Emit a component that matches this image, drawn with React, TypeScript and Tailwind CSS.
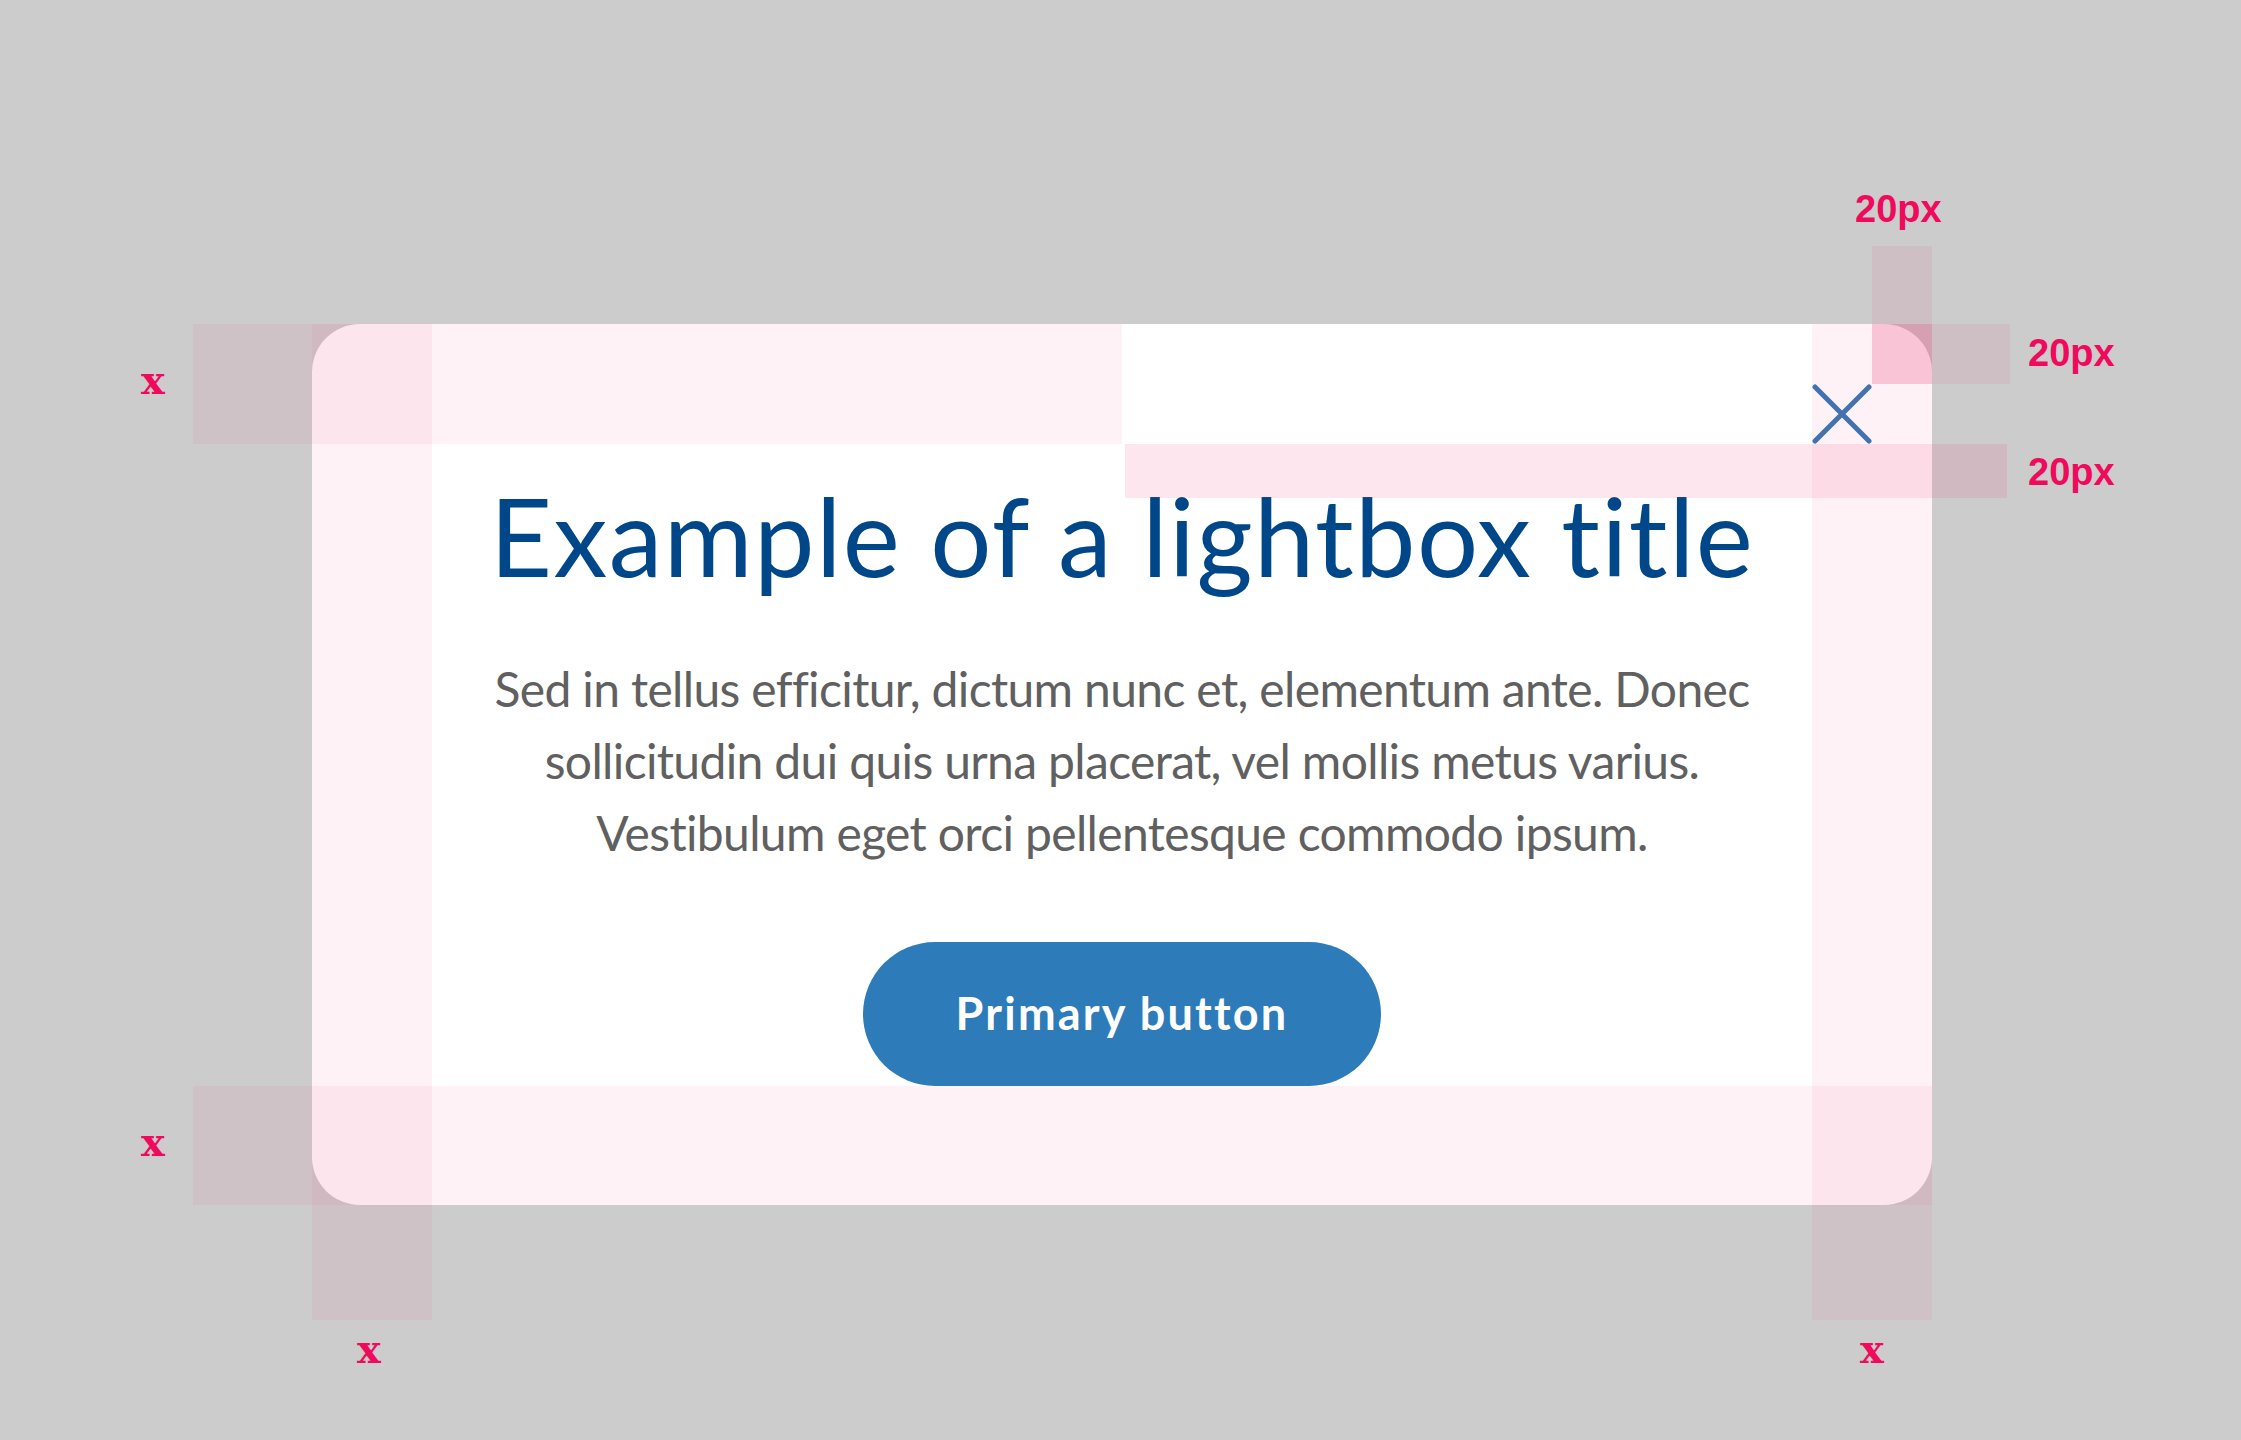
import React from "react";

// annotation overlays (pink measurement boxes) sit on top of the page
const Band: React.FC<{ className: string }> = ({ className }) => (
  <div className={`absolute pointer-events-none ${className}`} />
);

const CloseIcon: React.FC = () => (
  <svg width="60" height="60" viewBox="0 0 60 60" fill="none">
    <path
      d="M3 3 L57 57 M57 3 L3 57"
      stroke="#3576b4"
      strokeWidth="5"
      strokeLinecap="round"
    />
  </svg>
);

const Label: React.FC<{ className: string; children: React.ReactNode }> = ({
  className,
  children,
}) => (
  <span
    className={`absolute pointer-events-none text-[#ef0a5b] leading-none ${className}`}
  >
    {children}
  </span>
);

export default function App() {
  return (
    <div className="relative w-full min-h-[1440px] bg-[#cccccc] overflow-hidden">
      <div className="pt-[324px] pl-[312px]">
        <div className="relative w-[1620px] rounded-[48px] bg-white flex flex-col items-center px-[120px] pt-[157px] pb-[119px]">
          <button className="absolute top-[60px] right-[60px] w-[60px] h-[60px] flex items-center justify-center cursor-pointer">
            <CloseIcon />
          </button>

          <h1 className="text-[108px] leading-none tracking-[1.4px] text-[#00478a] font-['Lato','Noto_Sans',sans-serif] whitespace-nowrap">
            Example of a lightbox title
          </h1>

          <p className="mt-[64px] text-[48px] leading-[72px] tracking-[-0.65px] text-[#606060] text-center font-['Lato','Open_Sans',sans-serif] whitespace-nowrap">
            Sed in tellus efficitur, dictum nunc et, elementum ante. Donec
            <br />
            sollicitudin dui quis urna placerat, vel mollis metus varius.
            <br />
            Vestibulum eget orci pellentesque commodo ipsum.
          </p>

          <button className="mt-[73px] w-[518px] h-[144px] rounded-full bg-[#2d7bb8] text-white text-[45px] tracking-[2.2px] font-bold font-['Lato','Noto_Sans',sans-serif] flex items-center justify-center">
            Primary button
          </button>
        </div>
      </div>

      {/* measurement overlays */}
      <Band className="left-[193px] top-[324px] w-[929px] h-[120px] bg-[rgba(236,64,122,0.07)]" />
      <Band className="left-[312px] top-[324px] w-[120px] h-[996px] bg-[rgba(236,64,122,0.07)]" />
      <Band className="left-[193px] top-[1086px] w-[1739px] h-[119px] bg-[rgba(236,64,122,0.07)]" />
      <Band className="left-[1812px] top-[324px] w-[120px] h-[996px] bg-[rgba(236,64,122,0.07)]" />
      <Band className="left-[1125px] top-[444px] w-[882px] h-[54px] bg-[rgba(236,64,122,0.13)]" />
      <Band className="left-[1872px] top-[324px] w-[60px] h-[60px] bg-[rgba(236,64,122,0.26)]" />
      <Band className="left-[1872px] top-[246px] w-[60px] h-[78px] bg-[rgba(236,64,122,0.09)]" />
      <Band className="left-[1932px] top-[324px] w-[78px] h-[60px] bg-[rgba(236,64,122,0.09)]" />

      <Label className="left-[1855px] top-[190px] text-[38px] font-bold font-['Liberation_Sans',Arial,sans-serif]">
        20px
      </Label>
      <Label className="left-[2028px] top-[334px] text-[38px] font-bold font-['Liberation_Sans',Arial,sans-serif]">
        20px
      </Label>
      <Label className="left-[2028px] top-[453px] text-[38px] font-bold font-['Liberation_Sans',Arial,sans-serif]">
        20px
      </Label>

      <Label className="left-[141px] top-[360px] text-[40px] font-bold font-['DejaVu_Serif',serif]">
        x
      </Label>
      <Label className="left-[141px] top-[1122px] text-[40px] font-bold font-['DejaVu_Serif',serif]">
        x
      </Label>
      <Label className="left-[357px] top-[1329px] text-[40px] font-bold font-['DejaVu_Serif',serif]">
        x
      </Label>
      <Label className="left-[1860px] top-[1329px] text-[40px] font-bold font-['DejaVu_Serif',serif]">
        x
      </Label>
    </div>
  );
}
